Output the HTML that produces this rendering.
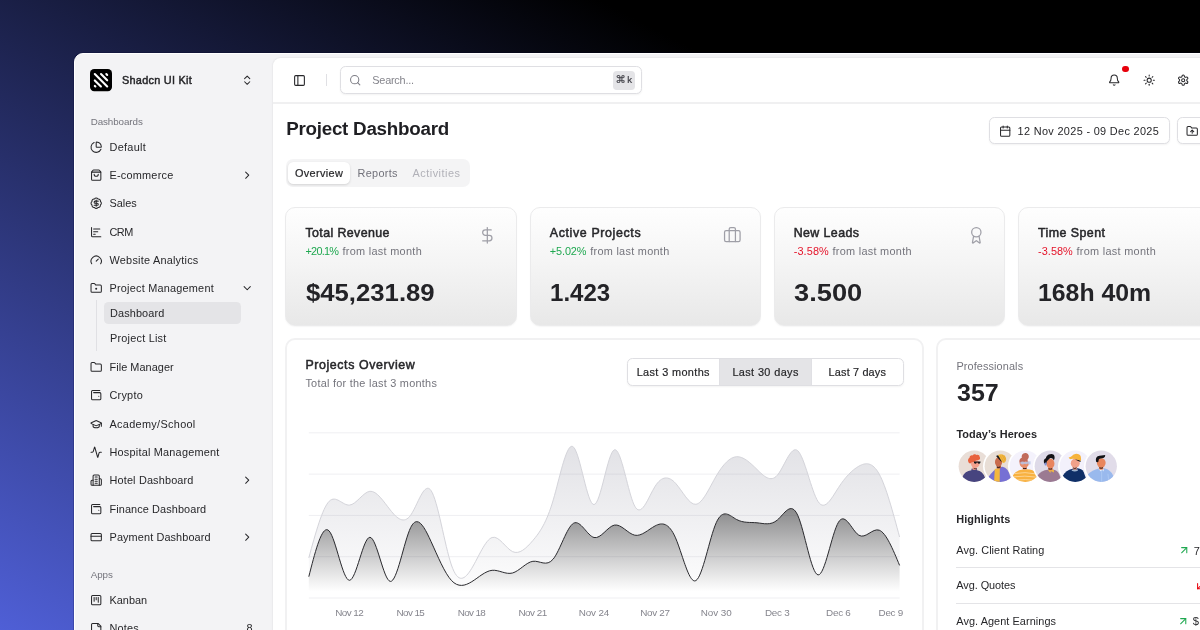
<!DOCTYPE html>
<html lang="en"><head><meta charset="utf-8"><title>Project Dashboard - Shadcn UI Kit</title>
<style>
*{box-sizing:border-box;margin:0;padding:0}
html,body{width:1200px;height:630px;overflow:hidden}
body{position:relative;font-family:"Liberation Sans",sans-serif;color:#27272a;background:linear-gradient(to top right,#4f5fd6 0%,#000 75%)}
.abs,.t,.ic{position:absolute}
.t{white-space:nowrap;line-height:1}
.ic{display:block;overflow:visible}
#win{left:74px;top:53px;width:1140px;height:600px;background:#f3f3f5;border:1.2px solid #fff;border-radius:9px 0 0 0;box-shadow:0 0 0 1px rgba(0,0,40,.2)}
#main{left:272.8px;top:58.4px;width:960px;height:600px;background:#fff;border-radius:7.5px 0 0 0;box-shadow:0 0 2px rgba(0,0,0,.12)}
.card{border:2px solid #f1f1f2;border-radius:10px;background:#fff}
.stat{border:1px solid #ebebec;background:linear-gradient(to bottom,#fefefe 0%,#f5f5f5 45%,#e8e8e8 100%);box-shadow:0 1px 1.5px rgba(0,0,0,.04)}
.btn{border:1px solid #dfdfe3;border-radius:5.5px;background:#fff;box-shadow:0 1px 2px rgba(0,0,0,.05)}
.hr{background:#e4e4e7;height:1px}
#app{position:absolute;left:0;top:0;width:1200px;height:630px;overflow:hidden;will-change:transform}
</style></head><body><div id="app">

<div class="abs" id="win"></div>
<aside>
<svg class="ic" style="left:90.1px;top:69.1px" width="22" height="22.3" viewBox="0 0 22 22.3"><rect width="22" height="22.3" rx="4.2" fill="#000"/><g stroke="#fff" stroke-width="2.1" stroke-linecap="round"><path d="M4.8 5.1L17.2 17.5"/><path d="M11 5.1L17.2 11.3"/><path d="M4.8 11.4L10.9 17.5"/><path d="M16.3 5.1L17.2 6"/><path d="M4.8 16.9L5.4 17.5"/></g></svg>
<span class="t" id="brand" style="left:122.00px;top:75.07px;font-size:10.9px;letter-spacing:0.267px;-webkit-text-stroke:0.45px #27272a;">Shadcn UI Kit</span>
<svg class="ic" style="left:241.40px;top:74.10px;" width="12.4" height="12.4" viewBox="0 0 24 24" fill="none" stroke="#27272a" stroke-width="2" stroke-linecap="round" stroke-linejoin="round"><path d="m7 15 5 5 5-5"/><path d="m7 9 5-5 5 5"/></svg>
<span class="t" id="lbl1" style="left:90.70px;top:116.70px;font-size:9.8px;color:#74747c;letter-spacing:-0.082px;">Dashboards</span>
<nav>
<svg class="ic" style="left:90.40px;top:140.50px;" width="12.4" height="12.4" viewBox="0 0 24 24" fill="none" stroke="#27272a" stroke-width="2" stroke-linecap="round" stroke-linejoin="round"><path d="M21 12c.552 0 1.005-.449.95-.998a10 10 0 0 0-8.953-8.951c-.55-.055-.998.398-.998.95v8a1 1 0 0 0 1 1z"/><path d="M21.21 15.89A10 10 0 1 1 8 2.83"/></svg>
<span class="t" id="nav0" style="left:109.50px;top:142.37px;font-size:10.9px;letter-spacing:0.282px;">Default</span>
<svg class="ic" style="left:90.40px;top:168.80px;" width="12.4" height="12.4" viewBox="0 0 24 24" fill="none" stroke="#27272a" stroke-width="2" stroke-linecap="round" stroke-linejoin="round"><path d="M16 10a4 4 0 0 1-8 0"/><path d="M3.103 6.034h17.794"/><path d="M3.4 5.467a2 2 0 0 0-.4 1.2V20a2 2 0 0 0 2 2h14a2 2 0 0 0 2-2V6.667a2 2 0 0 0-.4-1.2l-2-2.667A2 2 0 0 0 17 2H7a2 2 0 0 0-1.6.8z"/></svg>
<span class="t" id="nav1" style="left:109.50px;top:169.67px;font-size:10.9px;letter-spacing:0.219px;">E-commerce</span>
<svg class="ic" style="left:241.20px;top:168.80px;" width="12.4" height="12.4" viewBox="0 0 24 24" fill="none" stroke="#27272a" stroke-width="2" stroke-linecap="round" stroke-linejoin="round"><path d="m9 18 6-6-6-6"/></svg>
<svg class="ic" style="left:90.40px;top:197.10px;" width="12.4" height="12.4" viewBox="0 0 24 24" fill="none" stroke="#27272a" stroke-width="2" stroke-linecap="round" stroke-linejoin="round"><path d="M3.85 8.62a4 4 0 0 1 4.78-4.77 4 4 0 0 1 6.74 0 4 4 0 0 1 4.78 4.78 4 4 0 0 1 0 6.74 4 4 0 0 1-4.77 4.78 4 4 0 0 1-6.75 0 4 4 0 0 1-4.78-4.77 4 4 0 0 1 0-6.76Z"/><path d="M16 8h-6a2 2 0 1 0 0 4h4a2 2 0 1 1 0 4H8"/><path d="M12 18V6"/></svg>
<span class="t" id="nav2" style="left:109.50px;top:197.97px;font-size:10.9px;letter-spacing:-0.013px;">Sales</span>
<svg class="ic" style="left:90.40px;top:225.50px;" width="12.4" height="12.4" viewBox="0 0 24 24" fill="none" stroke="#27272a" stroke-width="2" stroke-linecap="round" stroke-linejoin="round"><path d="M3 3v16a2 2 0 0 0 2 2h16"/><path d="M7 11h8"/><path d="M7 16h3"/><path d="M7 6h12"/></svg>
<span class="t" id="nav3" style="left:109.50px;top:227.37px;font-size:10.9px;letter-spacing:-0.503px;">CRM</span>
<svg class="ic" style="left:90.40px;top:253.80px;" width="12.4" height="12.4" viewBox="0 0 24 24" fill="none" stroke="#27272a" stroke-width="2" stroke-linecap="round" stroke-linejoin="round"><path d="m12 14 4-4"/><path d="M3.34 19a10 10 0 1 1 17.32 0"/></svg>
<span class="t" id="nav4" style="left:109.50px;top:254.67px;font-size:10.9px;letter-spacing:0.228px;">Website Analytics</span>
<svg class="ic" style="left:90.40px;top:282.10px;" width="12.4" height="12.4" viewBox="0 0 24 24" fill="none" stroke="#27272a" stroke-width="2" stroke-linecap="round" stroke-linejoin="round"><path d="M4 20h16a2 2 0 0 0 2-2V8a2 2 0 0 0-2-2h-7.93a2 2 0 0 1-1.66-.9l-.82-1.2A2 2 0 0 0 7.93 3H4a2 2 0 0 0-2 2v13c0 1.1.9 2 2 2Z"/><circle cx="12" cy="13" r="1"/></svg>
<span class="t" id="nav5" style="left:109.50px;top:282.97px;font-size:10.9px;letter-spacing:0.218px;">Project Management</span>
<svg class="ic" style="left:241.20px;top:282.10px;" width="12.4" height="12.4" viewBox="0 0 24 24" fill="none" stroke="#27272a" stroke-width="2" stroke-linecap="round" stroke-linejoin="round"><path d="m6 9 6 6 6-6"/></svg>
<svg class="ic" style="left:90.40px;top:360.50px;" width="12.4" height="12.4" viewBox="0 0 24 24" fill="none" stroke="#27272a" stroke-width="2" stroke-linecap="round" stroke-linejoin="round"><path d="M20 20a2 2 0 0 0 2-2V8a2 2 0 0 0-2-2h-7.9a2 2 0 0 1-1.69-.9L9.6 3.9A2 2 0 0 0 7.93 3H4a2 2 0 0 0-2 2v13a2 2 0 0 0 2 2Z"/></svg>
<span class="t" id="nav6" style="left:109.50px;top:362.37px;font-size:10.9px;letter-spacing:0.058px;">File Manager</span>
<svg class="ic" style="left:90.40px;top:388.80px;" width="12.4" height="12.4" viewBox="0 0 24 24" fill="none" stroke="#27272a" stroke-width="2" stroke-linecap="round" stroke-linejoin="round"><path d="M17 14h.01"/><path d="M7 7h12a2 2 0 0 1 2 2v10a2 2 0 0 1-2 2H5a2 2 0 0 1-2-2V5a2 2 0 0 1 2-2h14"/></svg>
<span class="t" id="nav7" style="left:109.50px;top:389.67px;font-size:10.9px;letter-spacing:0.224px;">Crypto</span>
<svg class="ic" style="left:90.40px;top:417.50px;" width="12.4" height="12.4" viewBox="0 0 24 24" fill="none" stroke="#27272a" stroke-width="2" stroke-linecap="round" stroke-linejoin="round"><path d="M21.42 10.922a1 1 0 0 0-.019-1.838L12.83 5.18a2 2 0 0 0-1.66 0L2.6 9.08a1 1 0 0 0 0 1.832l8.57 3.908a2 2 0 0 0 1.66 0z"/><path d="M22 10v6"/><path d="M6 12.5V16a6 3 0 0 0 12 0v-3.5"/></svg>
<span class="t" id="nav8" style="left:109.50px;top:419.37px;font-size:10.9px;letter-spacing:0.313px;">Academy/School</span>
<svg class="ic" style="left:90.40px;top:446.00px;" width="12.4" height="12.4" viewBox="0 0 24 24" fill="none" stroke="#27272a" stroke-width="2" stroke-linecap="round" stroke-linejoin="round"><path d="M22 12h-2.48a2 2 0 0 0-1.93 1.46l-2.35 8.36a.25.25 0 0 1-.48 0L9.24 2.18a.25.25 0 0 0-.48 0l-2.35 8.36A2 2 0 0 1 4.49 12H2"/></svg>
<span class="t" id="nav9" style="left:109.50px;top:446.87px;font-size:10.9px;letter-spacing:0.214px;">Hospital Management</span>
<svg class="ic" style="left:90.40px;top:474.10px;" width="12.4" height="12.4" viewBox="0 0 24 24" fill="none" stroke="#27272a" stroke-width="2" stroke-linecap="round" stroke-linejoin="round"><path d="M6 22V4a2 2 0 0 1 2-2h8a2 2 0 0 1 2 2v18Z"/><path d="M6 12H4a2 2 0 0 0-2 2v6a2 2 0 0 0 2 2h2"/><path d="M18 9h2a2 2 0 0 1 2 2v9a2 2 0 0 1-2 2h-2"/><path d="M10 6h4"/><path d="M10 10h4"/><path d="M10 14h4"/><path d="M10 18h4"/></svg>
<span class="t" id="nav10" style="left:109.50px;top:474.97px;font-size:10.9px;letter-spacing:0.155px;">Hotel Dashboard</span>
<svg class="ic" style="left:241.20px;top:474.10px;" width="12.4" height="12.4" viewBox="0 0 24 24" fill="none" stroke="#27272a" stroke-width="2" stroke-linecap="round" stroke-linejoin="round"><path d="m9 18 6-6-6-6"/></svg>
<svg class="ic" style="left:90.40px;top:502.60px;" width="12.4" height="12.4" viewBox="0 0 24 24" fill="none" stroke="#27272a" stroke-width="2" stroke-linecap="round" stroke-linejoin="round"><path d="M17 14h.01"/><path d="M7 7h12a2 2 0 0 1 2 2v10a2 2 0 0 1-2 2H5a2 2 0 0 1-2-2V5a2 2 0 0 1 2-2h14"/></svg>
<span class="t" id="nav11" style="left:109.50px;top:504.47px;font-size:10.9px;letter-spacing:0.102px;">Finance Dashboard</span>
<svg class="ic" style="left:90.40px;top:530.70px;" width="12.4" height="12.4" viewBox="0 0 24 24" fill="none" stroke="#27272a" stroke-width="2" stroke-linecap="round" stroke-linejoin="round"><rect width="20" height="14" x="2" y="5" rx="2"/><line x1="2" x2="22" y1="10" y2="10"/></svg>
<span class="t" id="nav12" style="left:109.50px;top:531.57px;font-size:10.9px;letter-spacing:0.113px;">Payment Dashboard</span>
<svg class="ic" style="left:241.20px;top:530.70px;" width="12.4" height="12.4" viewBox="0 0 24 24" fill="none" stroke="#27272a" stroke-width="2" stroke-linecap="round" stroke-linejoin="round"><path d="m9 18 6-6-6-6"/></svg>
<svg class="ic" style="left:90.40px;top:593.80px;" width="12.4" height="12.4" viewBox="0 0 24 24" fill="none" stroke="#27272a" stroke-width="2" stroke-linecap="round" stroke-linejoin="round"><rect width="18" height="18" x="3" y="3" rx="2"/><path d="M8 7v7"/><path d="M12 7v4"/><path d="M16 7v9"/></svg>
<span class="t" id="nav13" style="left:109.50px;top:594.67px;font-size:10.9px;letter-spacing:0.010px;">Kanban</span>
<svg class="ic" style="left:90.40px;top:621.90px;" width="12.4" height="12.4" viewBox="0 0 24 24" fill="none" stroke="#27272a" stroke-width="2" stroke-linecap="round" stroke-linejoin="round"><path d="M16 3H5a2 2 0 0 0-2 2v14a2 2 0 0 0 2 2h14a2 2 0 0 0 2-2V8Z"/><path d="M15 3v4a2 2 0 0 0 2 2h4"/></svg>
<span class="t" id="nav14" style="left:109.50px;top:622.77px;font-size:10.9px;letter-spacing:0.187px;">Notes</span>
<div class="abs" style="left:96px;top:300px;width:1px;height:51px;background:#e0e0e4"></div>
<div class="abs" style="left:103.7px;top:302.3px;width:137.5px;height:22px;border-radius:4.5px;background:#e4e4e7"></div>
<span class="t" id="sub0" style="left:110.00px;top:307.97px;font-size:10.9px;letter-spacing:0.127px;">Dashboard</span>
<span class="t" id="sub1" style="left:110.00px;top:332.97px;font-size:10.9px;letter-spacing:0.220px;">Project List</span>
<span class="t" id="lbl2" style="left:90.70px;top:569.60px;font-size:9.8px;color:#74747c;letter-spacing:-0.080px;">Apps</span>
<span class="t" id="badge8" style="left:246.40px;top:622.77px;font-size:10.9px;letter-spacing:-0.662px;">8</span>
</nav></aside>
<main>
<div class="abs" id="main"></div>
<header>
<div class="abs" style="left:273px;top:101.5px;width:927px;height:2px;background:#f0f0f1"></div>
<svg class="ic" style="left:293.00px;top:73.60px;" width="13" height="13" viewBox="0 0 24 24" fill="none" stroke="#27272a" stroke-width="2" stroke-linecap="round" stroke-linejoin="round"><rect width="18" height="18" x="3" y="3" rx="2"/><path d="M9 3v18"/></svg>
<div class="abs" style="left:326px;top:74px;width:1px;height:12.4px;background:#e0e0e4"></div>
<div class="abs btn" style="left:339.6px;top:66.2px;width:302px;height:27.6px"></div>
<svg class="ic" style="left:349.20px;top:74.00px;" width="12.4" height="12.4" viewBox="0 0 24 24" fill="none" stroke="#7d7d85" stroke-width="2" stroke-linecap="round" stroke-linejoin="round"><circle cx="11" cy="11" r="8"/><path d="m21 21-4.3-4.3"/></svg>
<span class="t" id="search" style="left:372.30px;top:74.57px;font-size:10.9px;color:#85858c;letter-spacing:-0.237px;">Search...</span>
<div class="abs" style="left:612.9px;top:70.9px;width:22.3px;height:18.7px;border-radius:3.8px;background:#e4e4e7"></div>
<span class="t" id="kbd" style="left:615.60px;top:73.87px;font-size:9.6px;color:#3f3f46;letter-spacing:-1.385px;-webkit-text-stroke:0.2px #3f3f46;"><span style="font-family:'DejaVu Sans',sans-serif;font-size:10.5px;letter-spacing:0">⌘</span>&nbsp;k</span>
<svg class="ic" style="left:1108.30px;top:74.00px;" width="12.4" height="12.4" viewBox="0 0 24 24" fill="none" stroke="#27272a" stroke-width="2" stroke-linecap="round" stroke-linejoin="round"><path d="M10.268 21a2 2 0 0 0 3.464 0"/><path d="M3.262 15.326A1 1 0 0 0 4 17h16a1 1 0 0 0 .74-1.673C19.41 13.956 18 12.499 18 8A6 6 0 0 0 6 8c0 4.499-1.411 5.956-2.738 7.326"/></svg>
<div class="abs" style="left:1122.2px;top:65.7px;width:6.6px;height:6.6px;border-radius:50%;background:#e7000b"></div>
<svg class="ic" style="left:1142.80px;top:74.00px;" width="12.4" height="12.4" viewBox="0 0 24 24" fill="none" stroke="#27272a" stroke-width="2" stroke-linecap="round" stroke-linejoin="round"><circle cx="12" cy="12" r="4"/><path d="M12 2v2"/><path d="M12 20v2"/><path d="m4.93 4.93 1.41 1.41"/><path d="m17.66 17.66 1.41 1.41"/><path d="M2 12h2"/><path d="M20 12h2"/><path d="m6.34 17.66-1.41 1.41"/><path d="m19.07 4.93-1.41 1.41"/></svg>
<svg class="ic" style="left:1177.30px;top:74.00px;" width="12.4" height="12.4" viewBox="0 0 24 24" fill="none" stroke="#27272a" stroke-width="2" stroke-linecap="round" stroke-linejoin="round"><path d="M12.22 2h-.44a2 2 0 0 0-2 2v.18a2 2 0 0 1-1 1.73l-.43.25a2 2 0 0 1-2 0l-.15-.08a2 2 0 0 0-2.73.73l-.22.38a2 2 0 0 0 .73 2.73l.15.1a2 2 0 0 1 1 1.72v.51a2 2 0 0 1-1 1.74l-.15.09a2 2 0 0 0-.73 2.73l.22.38a2 2 0 0 0 2.73.73l.15-.08a2 2 0 0 1 2 0l.43.25a2 2 0 0 1 1 1.73V20a2 2 0 0 0 2 2h.44a2 2 0 0 0 2-2v-.18a2 2 0 0 1 1-1.73l.43-.25a2 2 0 0 1 2 0l.15.08a2 2 0 0 0 2.73-.73l.22-.39a2 2 0 0 0-.73-2.73l-.15-.08a2 2 0 0 1-1-1.74v-.5a2 2 0 0 1 1-1.74l.15-.09a2 2 0 0 0 .73-2.73l-.22-.38a2 2 0 0 0-2.73-.73l-.15.08a2 2 0 0 1-2 0l-.43-.25a2 2 0 0 1-1-1.73V4a2 2 0 0 0-2-2z"/><circle cx="12" cy="12" r="3"/></svg>
</header>
<h1 class="t" id="title" style="left:286.20px;top:120.09px;font-size:18.8px;font-weight:700;color:#1f1f23;letter-spacing:-0.250px;">Project Dashboard</h1>
<div class="abs btn" style="left:989.1px;top:117.2px;width:180.5px;height:27.3px"></div>
<svg class="ic" style="left:999.00px;top:124.60px;" width="12.4" height="12.4" viewBox="0 0 24 24" fill="none" stroke="#27272a" stroke-width="2" stroke-linecap="round" stroke-linejoin="round"><path d="M8 2v4"/><path d="M16 2v4"/><rect width="18" height="18" x="3" y="4" rx="2"/><path d="M3 10h18"/></svg>
<span class="t" id="date" style="left:1017.60px;top:125.67px;font-size:10.9px;letter-spacing:0.333px;">12 Nov 2025 - 09 Dec 2025</span>
<div class="abs btn" style="left:1176.5px;top:117.2px;width:60px;height:27.3px"></div>
<svg class="ic" style="left:1186.40px;top:124.60px;" width="12.4" height="12.4" viewBox="0 0 24 24" fill="none" stroke="#27272a" stroke-width="2" stroke-linecap="round" stroke-linejoin="round"><path d="M20 20a2 2 0 0 0 2-2V8a2 2 0 0 0-2-2h-7.9a2 2 0 0 1-1.69-.9L9.6 3.9A2 2 0 0 0 7.93 3H4a2 2 0 0 0-2 2v13a2 2 0 0 0 2 2Z"/><path d="M12 10v6"/><path d="m9 13 3-3 3 3"/></svg>
<div class="abs" style="left:285.5px;top:159.2px;width:184.3px;height:27.6px;border-radius:7px;background:#f4f4f5"></div>
<div class="abs" style="left:287.9px;top:161.7px;width:62.4px;height:22.7px;border-radius:5.5px;background:#fff;box-shadow:0 1px 2.5px rgba(0,0,0,.14)"></div>
<span class="t" id="tab0" style="left:294.90px;top:167.77px;font-size:10.9px;letter-spacing:0.373px;-webkit-text-stroke:0.2px #27272a;">Overview</span>
<span class="t" id="tab1" style="left:357.60px;top:167.77px;font-size:10.9px;color:#71717a;letter-spacing:0.277px;">Reports</span>
<span class="t" id="tab2" style="left:412.60px;top:167.77px;font-size:10.9px;color:#b1b1b8;letter-spacing:0.481px;">Activities</span>
<section class="abs card stat" style="left:285.3px;top:206.5px;width:231.4px;height:119px"></section>
<span class="t" id="ct0" style="left:305.50px;top:227.30px;font-size:12.4px;letter-spacing:0.391px;-webkit-text-stroke:0.5px #27272a;">Total Revenue</span>
<span class="t" id="cp0" style="left:305.50px;top:245.97px;font-size:10.9px;color:#1fa850;letter-spacing:-0.750px;">+20.1%</span>
<span class="t" id="cf0" style="left:342.50px;top:245.97px;font-size:10.9px;color:#74747c;letter-spacing:0.296px;">from last month</span>
<span class="t" id="cb0" style="left:306.00px;top:281.88px;font-size:23.3px;font-weight:700;color:#232327;transform:scaleX(1.1029);transform-origin:0 0;">$45,231.89</span>
<svg class="ic" style="left:478.28px;top:226.18px;" width="18.65" height="18.65" viewBox="0 0 24 24" fill="none" stroke="#9f9fa7" stroke-width="1.6" stroke-linecap="round" stroke-linejoin="round"><line x1="12" x2="12" y1="2" y2="22"/><path d="M17 5H9.5a3.5 3.5 0 0 0 0 7h5a3.5 3.5 0 0 1 0 7H6"/></svg>
<section class="abs card stat" style="left:529.6px;top:206.5px;width:231.4px;height:119px"></section>
<span class="t" id="ct1" style="left:549.80px;top:227.30px;font-size:12.4px;letter-spacing:0.632px;-webkit-text-stroke:0.5px #27272a;">Active Projects</span>
<span class="t" id="cp1" style="left:549.80px;top:245.97px;font-size:10.9px;color:#1fa850;letter-spacing:-0.110px;">+5.02%</span>
<span class="t" id="cf1" style="left:590.20px;top:245.97px;font-size:10.9px;color:#74747c;letter-spacing:0.282px;">from last month</span>
<span class="t" id="cb1" style="left:549.80px;top:281.88px;font-size:23.3px;font-weight:700;color:#232327;transform:scaleX(1.0324);transform-origin:0 0;">1.423</span>
<svg class="ic" style="left:722.67px;top:225.68px;" width="18.65" height="18.65" viewBox="0 0 24 24" fill="none" stroke="#9f9fa7" stroke-width="1.6" stroke-linecap="round" stroke-linejoin="round"><path d="M16 20V4a2 2 0 0 0-2-2h-4a2 2 0 0 0-2 2v16"/><rect width="20" height="14" x="2" y="6" rx="2"/></svg>
<section class="abs card stat" style="left:773.5px;top:206.5px;width:231.4px;height:119px"></section>
<span class="t" id="ct2" style="left:793.70px;top:227.30px;font-size:12.4px;letter-spacing:0.413px;-webkit-text-stroke:0.5px #27272a;">New Leads</span>
<span class="t" id="cp2" style="left:793.70px;top:245.97px;font-size:10.9px;color:#e5142a;letter-spacing:0.117px;">-3.58%</span>
<span class="t" id="cf2" style="left:832.50px;top:245.97px;font-size:10.9px;color:#74747c;letter-spacing:0.282px;">from last month</span>
<span class="t" id="cb2" style="left:793.80px;top:281.88px;font-size:23.3px;font-weight:700;color:#232327;transform:scaleX(1.1696);transform-origin:0 0;">3.500</span>
<svg class="ic" style="left:966.67px;top:226.08px;" width="18.65" height="18.65" viewBox="0 0 24 24" fill="none" stroke="#9f9fa7" stroke-width="1.6" stroke-linecap="round" stroke-linejoin="round"><path d="m15.477 12.89 1.515 8.526a.5.5 0 0 1-.81.47l-3.58-2.687a1 1 0 0 0-1.197 0l-3.586 2.686a.5.5 0 0 1-.81-.469l1.514-8.526"/><circle cx="12" cy="8" r="6"/></svg>
<section class="abs card stat" style="left:1017.8px;top:206.5px;width:231.4px;height:119px"></section>
<span class="t" id="ct3" style="left:1038.00px;top:227.30px;font-size:12.4px;letter-spacing:0.455px;-webkit-text-stroke:0.5px #27272a;">Time Spent</span>
<span class="t" id="cp3" style="left:1038.00px;top:245.97px;font-size:10.9px;color:#e5142a;letter-spacing:0.057px;">-3.58%</span>
<span class="t" id="cf3" style="left:1076.50px;top:245.97px;font-size:10.9px;color:#74747c;letter-spacing:0.296px;">from last month</span>
<span class="t" id="cb3" style="left:1037.80px;top:281.88px;font-size:23.3px;font-weight:700;color:#232327;transform:scaleX(1.0659);transform-origin:0 0;">168h 40m</span>
<section class="abs card" style="left:284.8px;top:338px;width:639.2px;height:330px"></section>
<span class="t" id="ch1" style="left:305.40px;top:358.50px;font-size:12.4px;letter-spacing:0.597px;-webkit-text-stroke:0.5px #27272a;">Projects Overview</span>
<span class="t" id="ch2" style="left:305.40px;top:378.07px;font-size:10.9px;color:#74747c;letter-spacing:0.261px;">Total for the last 3 months</span>
<div class="abs btn" style="left:627px;top:358.3px;width:276.8px;height:28.2px;overflow:hidden"><div class="abs" style="left:91.4px;top:0;width:93px;height:100%;background:#e4e4e7;border-left:1px solid #e0e0e4;border-right:1px solid #e0e0e4"></div></div>
<span class="t" id="tg0" style="left:636.70px;top:367.27px;font-size:10.9px;letter-spacing:0.373px;-webkit-text-stroke:0.2px #27272a;">Last 3 months</span>
<span class="t" id="tg1" style="left:732.40px;top:367.27px;font-size:10.9px;letter-spacing:0.386px;-webkit-text-stroke:0.2px #27272a;">Last 30 days</span>
<span class="t" id="tg2" style="left:828.60px;top:367.27px;font-size:10.9px;letter-spacing:0.160px;-webkit-text-stroke:0.2px #27272a;">Last 7 days</span>
<svg class="abs" style="left:0;top:420px" width="1200" height="210" viewBox="0 420 1200 210"><defs><linearGradient id="gd" x1="0" y1="506" x2="0" y2="598" gradientUnits="userSpaceOnUse"><stop offset="0.05" stop-color="#18181b" stop-opacity="0.5"/><stop offset="0.93" stop-color="#18181b" stop-opacity="0.0"/></linearGradient><linearGradient id="gl" x1="0" y1="445" x2="0" y2="586" gradientUnits="userSpaceOnUse"><stop offset="0.05" stop-color="#737387" stop-opacity="0.2"/><stop offset="0.95" stop-color="#737387" stop-opacity="0.03"/></linearGradient></defs><line x1="308.8" x2="899.6" y1="432.8" y2="432.8" stroke="#efeff2" stroke-width="1"/><line x1="308.8" x2="899.6" y1="474.1" y2="474.1" stroke="#efeff2" stroke-width="1"/><line x1="308.8" x2="899.6" y1="515.4" y2="515.4" stroke="#efeff2" stroke-width="1"/><line x1="308.8" x2="899.6" y1="556.7" y2="556.7" stroke="#efeff2" stroke-width="1"/><line x1="308.8" x2="899.6" y1="598" y2="598" stroke="#efeff2" stroke-width="1"/><path d="M308.80,557.90C315.59,533.01,322.38,508.13,329.17,501.30C335.96,494.47,342.75,505.70,349.54,505.10C356.33,504.50,363.13,492.06,369.92,491.30C376.71,490.54,383.50,501.47,390.29,510.00C397.08,518.53,403.87,524.68,410.66,515.20C417.45,505.72,424.24,480.63,431.03,490.50C437.82,500.37,444.61,545.20,451.40,565.00C458.19,584.80,464.99,579.58,471.78,568.30C478.57,557.02,485.36,539.68,492.15,537.50C498.94,535.32,505.73,548.31,512.52,551.60C519.31,554.89,526.10,548.47,532.89,540.50C539.68,532.53,546.47,523.00,553.26,499.90C560.05,476.80,566.85,440.13,573.64,447.20C580.43,454.27,587.22,505.07,594.01,504.60C600.80,504.13,607.59,452.40,614.38,449.80C621.17,447.20,627.96,493.75,634.75,506.20C641.54,518.65,648.33,497.00,655.12,486.30C661.91,475.60,668.71,475.84,675.50,483.20C682.29,490.56,689.08,505.04,695.87,504.30C702.66,503.56,709.45,487.61,716.24,476.00C723.03,464.39,729.82,457.12,736.61,456.70C743.40,456.28,750.19,462.71,756.98,469.40C763.77,476.09,770.57,483.04,777.36,475.20C784.15,467.36,790.94,444.73,797.73,450.70C804.52,456.67,811.31,491.25,818.10,501.60C824.89,511.95,831.68,498.08,838.47,487.60C845.26,477.12,852.05,470.04,858.84,466.20C865.63,462.36,872.43,461.76,879.22,474.10C886.01,486.44,892.80,511.72,899.59,537.00L899.59,565.40C892.80,549.00,886.01,532.60,879.22,530.20C872.43,527.80,865.63,539.39,858.84,535.20C852.05,531.01,845.26,511.03,838.47,522.20C831.68,533.37,824.89,575.67,818.10,574.90C811.31,574.13,804.52,530.28,797.73,515.30C790.94,500.32,784.15,514.22,777.36,520.00C770.57,525.78,763.77,523.45,756.98,522.80C750.19,522.15,743.40,523.17,736.61,519.50C729.82,515.83,723.03,507.47,716.24,522.70C709.45,537.93,702.66,576.75,695.87,580.60C689.08,584.45,682.29,553.34,675.50,537.80C668.71,522.26,661.91,522.31,655.12,525.90C648.33,529.49,641.54,536.64,634.75,535.20C627.96,533.76,621.17,523.73,614.38,525.10C607.59,526.47,600.80,539.25,594.01,537.50C587.22,535.75,580.43,519.48,573.64,523.20C566.85,526.92,560.05,550.64,553.26,559.00C546.47,567.36,539.68,560.35,532.89,561.30C526.10,562.25,519.31,571.15,512.52,573.00C505.73,574.85,498.94,569.64,492.15,570.30C485.36,570.96,478.57,577.49,471.78,581.70C464.99,585.91,458.19,587.79,451.40,580.40C444.61,573.01,437.82,556.34,431.03,541.50C424.24,526.66,417.45,513.66,410.66,527.60C403.87,541.54,397.08,582.43,390.29,581.40C383.50,580.37,376.71,537.41,369.92,537.30C363.13,537.19,356.33,579.93,349.54,580.30C342.75,580.67,335.96,538.66,329.17,531.00C322.38,523.34,315.59,550.02,308.80,576.70Z" fill="url(#gl)"/><path d="M308.80,557.90C315.59,533.01,322.38,508.13,329.17,501.30C335.96,494.47,342.75,505.70,349.54,505.10C356.33,504.50,363.13,492.06,369.92,491.30C376.71,490.54,383.50,501.47,390.29,510.00C397.08,518.53,403.87,524.68,410.66,515.20C417.45,505.72,424.24,480.63,431.03,490.50C437.82,500.37,444.61,545.20,451.40,565.00C458.19,584.80,464.99,579.58,471.78,568.30C478.57,557.02,485.36,539.68,492.15,537.50C498.94,535.32,505.73,548.31,512.52,551.60C519.31,554.89,526.10,548.47,532.89,540.50C539.68,532.53,546.47,523.00,553.26,499.90C560.05,476.80,566.85,440.13,573.64,447.20C580.43,454.27,587.22,505.07,594.01,504.60C600.80,504.13,607.59,452.40,614.38,449.80C621.17,447.20,627.96,493.75,634.75,506.20C641.54,518.65,648.33,497.00,655.12,486.30C661.91,475.60,668.71,475.84,675.50,483.20C682.29,490.56,689.08,505.04,695.87,504.30C702.66,503.56,709.45,487.61,716.24,476.00C723.03,464.39,729.82,457.12,736.61,456.70C743.40,456.28,750.19,462.71,756.98,469.40C763.77,476.09,770.57,483.04,777.36,475.20C784.15,467.36,790.94,444.73,797.73,450.70C804.52,456.67,811.31,491.25,818.10,501.60C824.89,511.95,831.68,498.08,838.47,487.60C845.26,477.12,852.05,470.04,858.84,466.20C865.63,462.36,872.43,461.76,879.22,474.10C886.01,486.44,892.80,511.72,899.59,537.00" fill="none" stroke="#d4d4da" stroke-width="1"/><path d="M308.80,576.70C315.59,550.02,322.38,523.34,329.17,531.00C335.96,538.66,342.75,580.67,349.54,580.30C356.33,579.93,363.13,537.19,369.92,537.30C376.71,537.41,383.50,580.37,390.29,581.40C397.08,582.43,403.87,541.54,410.66,527.60C417.45,513.66,424.24,526.66,431.03,541.50C437.82,556.34,444.61,573.01,451.40,580.40C458.19,587.79,464.99,585.91,471.78,581.70C478.57,577.49,485.36,570.96,492.15,570.30C498.94,569.64,505.73,574.85,512.52,573.00C519.31,571.15,526.10,562.25,532.89,561.30C539.68,560.35,546.47,567.36,553.26,559.00C560.05,550.64,566.85,526.92,573.64,523.20C580.43,519.48,587.22,535.75,594.01,537.50C600.80,539.25,607.59,526.47,614.38,525.10C621.17,523.73,627.96,533.76,634.75,535.20C641.54,536.64,648.33,529.49,655.12,525.90C661.91,522.31,668.71,522.26,675.50,537.80C682.29,553.34,689.08,584.45,695.87,580.60C702.66,576.75,709.45,537.93,716.24,522.70C723.03,507.47,729.82,515.83,736.61,519.50C743.40,523.17,750.19,522.15,756.98,522.80C763.77,523.45,770.57,525.78,777.36,520.00C784.15,514.22,790.94,500.32,797.73,515.30C804.52,530.28,811.31,574.13,818.10,574.90C824.89,575.67,831.68,533.37,838.47,522.20C845.26,511.03,852.05,531.01,858.84,535.20C865.63,539.39,872.43,527.80,879.22,530.20C886.01,532.60,892.80,549.00,899.59,565.40L899.59,598L308.8,598Z" fill="url(#gd)"/><path d="M308.80,576.70C315.59,550.02,322.38,523.34,329.17,531.00C335.96,538.66,342.75,580.67,349.54,580.30C356.33,579.93,363.13,537.19,369.92,537.30C376.71,537.41,383.50,580.37,390.29,581.40C397.08,582.43,403.87,541.54,410.66,527.60C417.45,513.66,424.24,526.66,431.03,541.50C437.82,556.34,444.61,573.01,451.40,580.40C458.19,587.79,464.99,585.91,471.78,581.70C478.57,577.49,485.36,570.96,492.15,570.30C498.94,569.64,505.73,574.85,512.52,573.00C519.31,571.15,526.10,562.25,532.89,561.30C539.68,560.35,546.47,567.36,553.26,559.00C560.05,550.64,566.85,526.92,573.64,523.20C580.43,519.48,587.22,535.75,594.01,537.50C600.80,539.25,607.59,526.47,614.38,525.10C621.17,523.73,627.96,533.76,634.75,535.20C641.54,536.64,648.33,529.49,655.12,525.90C661.91,522.31,668.71,522.26,675.50,537.80C682.29,553.34,689.08,584.45,695.87,580.60C702.66,576.75,709.45,537.93,716.24,522.70C723.03,507.47,729.82,515.83,736.61,519.50C743.40,523.17,750.19,522.15,756.98,522.80C763.77,523.45,770.57,525.78,777.36,520.00C784.15,514.22,790.94,500.32,797.73,515.30C804.52,530.28,811.31,574.13,818.10,574.90C824.89,575.67,831.68,533.37,838.47,522.20C845.26,511.03,852.05,531.01,858.84,535.20C865.63,539.39,872.43,527.80,879.22,530.20C886.01,532.60,892.80,549.00,899.59,565.40" fill="none" stroke="#2a2a2e" stroke-width="1"/></svg>
<span class="t" id="xl0" style="left:335.29px;top:608.42px;font-size:9.9px;color:#85858d;letter-spacing:-0.559px;">Nov 12</span>
<span class="t" id="xl1" style="left:396.51px;top:608.42px;font-size:9.9px;color:#85858d;letter-spacing:-0.598px;">Nov 15</span>
<span class="t" id="xl2" style="left:457.68px;top:608.42px;font-size:9.9px;color:#85858d;letter-spacing:-0.620px;">Nov 18</span>
<span class="t" id="xl3" style="left:518.49px;top:608.42px;font-size:9.9px;color:#85858d;letter-spacing:-0.499px;">Nov 21</span>
<span class="t" id="xl4" style="left:578.71px;top:608.42px;font-size:9.9px;color:#85858d;letter-spacing:-0.141px;">Nov 24</span>
<span class="t" id="xl5" style="left:640.22px;top:608.42px;font-size:9.9px;color:#85858d;letter-spacing:-0.298px;">Nov 27</span>
<span class="t" id="xl6" style="left:700.64px;top:608.42px;font-size:9.9px;color:#85858d;letter-spacing:-0.020px;">Nov 30</span>
<span class="t" id="xl7" style="left:764.96px;top:608.42px;font-size:9.9px;color:#85858d;letter-spacing:-0.252px;">Dec 3</span>
<span class="t" id="xl8" style="left:826.07px;top:608.42px;font-size:9.9px;color:#85858d;letter-spacing:-0.252px;">Dec 6</span>
<span class="t" id="xl9" style="left:878.50px;top:608.42px;font-size:9.9px;color:#85858d;letter-spacing:-0.252px;">Dec 9</span>
<section class="abs card" style="left:936px;top:338px;width:320px;height:330px"></section>
<span class="t" id="r1" style="left:956.40px;top:360.67px;font-size:10.9px;color:#74747c;letter-spacing:0.110px;">Professionals</span>
<span class="t" id="r2" style="left:956.60px;top:382.28px;font-size:23.3px;font-weight:700;color:#232327;transform:scaleX(1.0727);transform-origin:0 0;">357</span>
<span class="t" id="r3" style="left:956.40px;top:428.77px;font-size:10.9px;font-weight:700;letter-spacing:0.054px;">Today’s Heroes</span>
<div class="avatars"><svg class="ic" style="left:957.40px;top:449.45px" width="34.50" height="34.50" viewBox="-17.25 -17.25 34.5 34.5"><defs><clipPath id="av0"><circle r="15.65"/></clipPath></defs><circle r="17.25" fill="#fff"/><circle r="15.65" fill="#e9ded7"/><g clip-path="url(#av0)"><path d="M-11.8 10.5Q-9.5 4.8-2.8 3.9L-2.8 2.6Q0 1.6 2.8 2.6L2.8 3.9Q8.5 5 10.6 11L12 17H-13Z" fill="#47447f"/><path d="M-1.8-1h4v4.2q-2 .9-4 0z" fill="#f4a18d"/><ellipse cx="1" cy="-2.6" rx="4.3" ry="4.2" fill="#f4a18d"/><path d="M-5.9-4.2c-.9-2.200.3-3.800 1.200-4.300c-.2-1.800 1.800-2.900 3-2.300c.9-1.500 3.200-1.600 4-.5c1.300-.7 3.300.2 3 1.800c.9.900.6 2.600-.4 3.100c-1.200.5-3 .1-3.900 1.100c-1.500 1.300-3.200.6-4.100 1.900c-.8 1-2.300.5-2.800-.8z" fill="#e8623e"/><path d="M-.4-4.700h6.700q.2 1.900-1.300 2.100q-1.400.1-1.800-1.200h-.7q-.3 1.400-1.700 1.300q-1.400-.2-1.200-2.200z" fill="#15151a"/><path d="M-.5 1.500q1.500.9 3 .2l.2.900q-1.700.8-3.200-.2z" fill="#2a1d1d" opacity=".8"/></g></svg><svg class="ic" style="left:982.62px;top:449.45px" width="34.50" height="34.50" viewBox="-17.25 -17.25 34.5 34.5"><defs><clipPath id="av1"><circle r="15.65"/></clipPath></defs><circle r="17.25" fill="#fff"/><circle r="15.65" fill="#e8ded6"/><g clip-path="url(#av1)"><path d="M-12 11Q-7 3.500-1.500 1.200L2.200.6Q8 1.500 10.200 11L11 17H-13Z" fill="#7670d4"/><path d="M-5.500 2.800L-.400 1.400L-.600 17H-6.200Z" fill="#f3b73f"/><path d="M-3.400-1.500h4.200v3.200q-2.300 1.300-4.200.3z" fill="#c96b4b"/><ellipse cx="-1.700" cy="-4.300" rx="3.600" ry="4.600" fill="#c96b4b"/><path d="M-4.200-10.300q2-1.300 3.700-.2l3 5.200q-1 .9-2 .3z" fill="#17171b"/><path d="M-2.300-11.300q3.500-1.600 6.500.6q2.700 2.600 1 6.300q-1.300 1.800-3.300.5z" fill="#f3b73f"/><path d="M-.2-10.800l3.800 6.500M1.800-11.500l3.200 6.200M3.700-10.700l1.900 4.200" stroke="#d99a2b" stroke-width=".5" fill="none"/><path d="M-3.600.3q1.800.9 3.600-.2l.2.900q-2 1.100-3.700.2z" fill="#1d1414"/></g></svg><svg class="ic" style="left:1007.84px;top:449.45px" width="34.50" height="34.50" viewBox="-17.25 -17.25 34.5 34.5"><defs><clipPath id="av2"><circle r="15.65"/></clipPath></defs><circle r="17.25" fill="#fff"/><circle r="15.65" fill="#f4f2fc"/><g clip-path="url(#av2)"><path d="M-12.200 9Q-9 4 -2.500 3.300Q1 2.600 4.500 3.300Q10.500 4.500 12 9.500L13 17H-14Z" fill="#f8b140"/><path d="M-10.500 7.300q10-2 21 .3M-11.500 10.600q11-1.600 22.600.3M-9 13.800q9-1 18 .2" stroke="#fcd79a" stroke-width=".9" fill="none"/><path d="M-2.600-1h4.200v4.100q-2.100.9-4.200 0z" fill="#e98f6d"/><ellipse cx="-1" cy="-2.800" rx="4.600" ry="4.300" fill="#e98f6d"/><path d="M-5.800-3.800c-.6-2.500 1-4.200 2.400-4.600c-.6-2.200.8-4.700 3.300-4.800c2.600-.1 4.100 2.200 3.600 4.300c-.3 1.400-1.500 2.200-1.300 3.400c.1.900 1 1.300 1.500 1.200c-1.200.9-2.800.3-3.200-1c-1.700 1.200-4.300.6-5.100 2.300z" fill="#c16a5b"/><path d="M-5-4.200q2.300-1.300 4.600 0q1.700-1 3.600-.5l2.100-.2v2.800q-1.500.8-2.600-.6q-1.500 1.400-3.200.2q-2 1.300-4.200.1z" fill="#b9c6e6" opacity=".85"/><path d="M-2.200 1.500q1.700.8 3.500-.1l.1.800q-1.800 1-3.600.2z" fill="#221616"/></g></svg><svg class="ic" style="left:1033.06px;top:449.45px" width="34.50" height="34.50" viewBox="-17.25 -17.25 34.5 34.5"><defs><clipPath id="av3"><circle r="15.65"/></clipPath></defs><circle r="17.25" fill="#fff"/><circle r="15.65" fill="#dedae8"/><g clip-path="url(#av3)"><path d="M-12.500 9Q-9 4.300-2.500 3.600L3.600 3.600Q8.500 4.500 10 11L11 17H-14Z" fill="#9b7a92"/><path d="M-2.400 3.600L.200 6.800L.5 4.700L3.700 6.300L3.600 3.600Z" fill="#f0b943"/><path d="M-2-.5h4.500v4.300q-2.300.9-4.500 0z" fill="#e8855f"/><ellipse cx=".2" cy="-2.600" rx="4" ry="4.900" fill="#e8855f"/><path d="M-6.300-3.800c-.6-2.500.8-3.600 1.900-4.100c.2-2.500 2.600-4.400 4.600-4.200c1.500-.6 3.700.3 4 2c.5 2.100-.1 3.500-.8 4.100c-.6-1.600-1.800-2.300-3-2.200c-1.600.3-2 2.300-3.600 3c-.6 1.500-.6 2.700-.9 3.200c-1-.1-1.900-.8-2.200-1.800z" fill="#121216"/><rect x="-5.700" y="-3.700" width="2" height="2.900" rx=".9" fill="#7f90d6"/><path d="M-1.800 1.900q1.700.9 3.600.1l.1.900q-1.900.9-3.700 0z" fill="#1b1212"/></g></svg><svg class="ic" style="left:1058.28px;top:449.45px" width="34.50" height="34.50" viewBox="-17.25 -17.25 34.5 34.5"><defs><clipPath id="av4"><circle r="15.65"/></clipPath></defs><circle r="17.25" fill="#fff"/><circle r="15.65" fill="#f3f1fb"/><g clip-path="url(#av4)"><path d="M-12.300 9.300Q-9.500 3.800-2.800 2.400L2.500 2.100Q7 2.500 8.500 6L10.500 11.500L11 17H-14Z" fill="#0f2f67"/><path d="M-3.500 3.300q3 .9 6-.3l.1 1.500q-3 1.300-6.100.1z" fill="#9fb4cf"/><path d="M-2.500-.5h4.200v3.500q-2.100 1.100-4.200 0z" fill="#f0a18a"/><ellipse cx="0" cy="-3" rx="4.500" ry="4.600" fill="#f0a18a"/><path d="M-.2-6.700q2.800-.6 5.600.9l-.2 1.600q-2.900-1.500-5.400-2.500z" fill="#15151a"/><path d="M-6.600-8.700q1.800-.2 2.900-1.300q1.800-2.300 4.700-2.400q3.600.2 4.500 2.700q.6 2.300.1 4.400q-3.200-1.600-5.800-1.900q-2.600-.5-4.600.1q-1.400-.4-1.800-1.600z" fill="#f6b33d"/><path d="M-2.400 1.200q1.900.9 3.700-.1l.1.800q-2 1-3.800.2z" fill="#241818"/></g></svg><svg class="ic" style="left:1083.50px;top:449.45px" width="34.50" height="34.50" viewBox="-17.25 -17.25 34.5 34.5"><defs><clipPath id="av5"><circle r="15.65"/></clipPath></defs><circle r="17.25" fill="#fff"/><circle r="15.65" fill="#e1dce9"/><g clip-path="url(#av5)"><path d="M-13.700 8.300Q-9 3.800-2.500 2.200L3.200 2Q9.500 3.500 12 9.500L13 17H-15Z" fill="#99b9ed"/><path d="M-2.700 2.700L-.300 5.300L.800 3.500L2.400 5.200L2.400 2.400Z" fill="#e8f1fd"/><path d="M.4 5v12M6.700 7.500l.6 6" stroke="#b8d1f6" stroke-width=".6" fill="none"/><path d="M-2.200-.5h4.200v3.400q-2.100 1-4.200 0z" fill="#e8865d"/><ellipse cx="0" cy="-3.400" rx="4.400" ry="4.700" fill="#e8865d"/><path d="M-5-4.200c-.9-2.600-.2-4.600 1.400-5.700c2.200-1.300 5.500-.5 7.500-1.300c.3 1.500-.8 2.600-1.800 2.900c-1.700.4-3.600.2-4.400 1.300c-.5.900-.2 2-.9 3.100z" fill="#121216"/><path d="M-1.900 1.100q1.700.9 3.600 0l.1.800q-1.900.9-3.700.1z" fill="#2a1a16"/></g></svg></div>
<span class="t" id="r4" style="left:956.30px;top:513.87px;font-size:10.9px;font-weight:700;letter-spacing:0.085px;">Highlights</span>
<span class="t" id="r5" style="left:956.30px;top:544.77px;font-size:10.9px;letter-spacing:0.060px;">Avg. Client Rating</span>
<div class="abs hr" style="left:956px;top:567.2px;width:260px"></div>
<span class="t" id="r6" style="left:956.30px;top:579.77px;font-size:10.9px;letter-spacing:-0.053px;">Avg. Quotes</span>
<div class="abs hr" style="left:956px;top:602.8px;width:260px"></div>
<span class="t" id="r7" style="left:956.30px;top:615.77px;font-size:10.9px;letter-spacing:0.067px;">Avg. Agent Earnings</span>
<svg class="ic" style="left:1177.90px;top:544.10px;" width="12.4" height="12.4" viewBox="0 0 24 24" fill="none" stroke="#1fa850" stroke-width="2" stroke-linecap="round" stroke-linejoin="round"><path d="M7 7h10v10"/><path d="M7 17 17 7"/></svg>
<span class="t" id="v1" style="left:1193.70px;top:546.37px;font-size:10.9px;">7.8</span>
<svg class="ic" style="left:1194.20px;top:579.80px;" width="12.4" height="12.4" viewBox="0 0 24 24" fill="none" stroke="#e7000b" stroke-width="2" stroke-linecap="round" stroke-linejoin="round"><path d="M17 7 7 17"/><path d="M17 17H7V7"/></svg>
<svg class="ic" style="left:1176.70px;top:614.80px;" width="12.4" height="12.4" viewBox="0 0 24 24" fill="none" stroke="#1fa850" stroke-width="2" stroke-linecap="round" stroke-linejoin="round"><path d="M7 7h10v10"/><path d="M7 17 17 7"/></svg>
<span class="t" id="v3" style="left:1192.80px;top:615.52px;font-size:11.2px;letter-spacing:1.2px;">$2,309</span>
</main>
</div></body></html>
